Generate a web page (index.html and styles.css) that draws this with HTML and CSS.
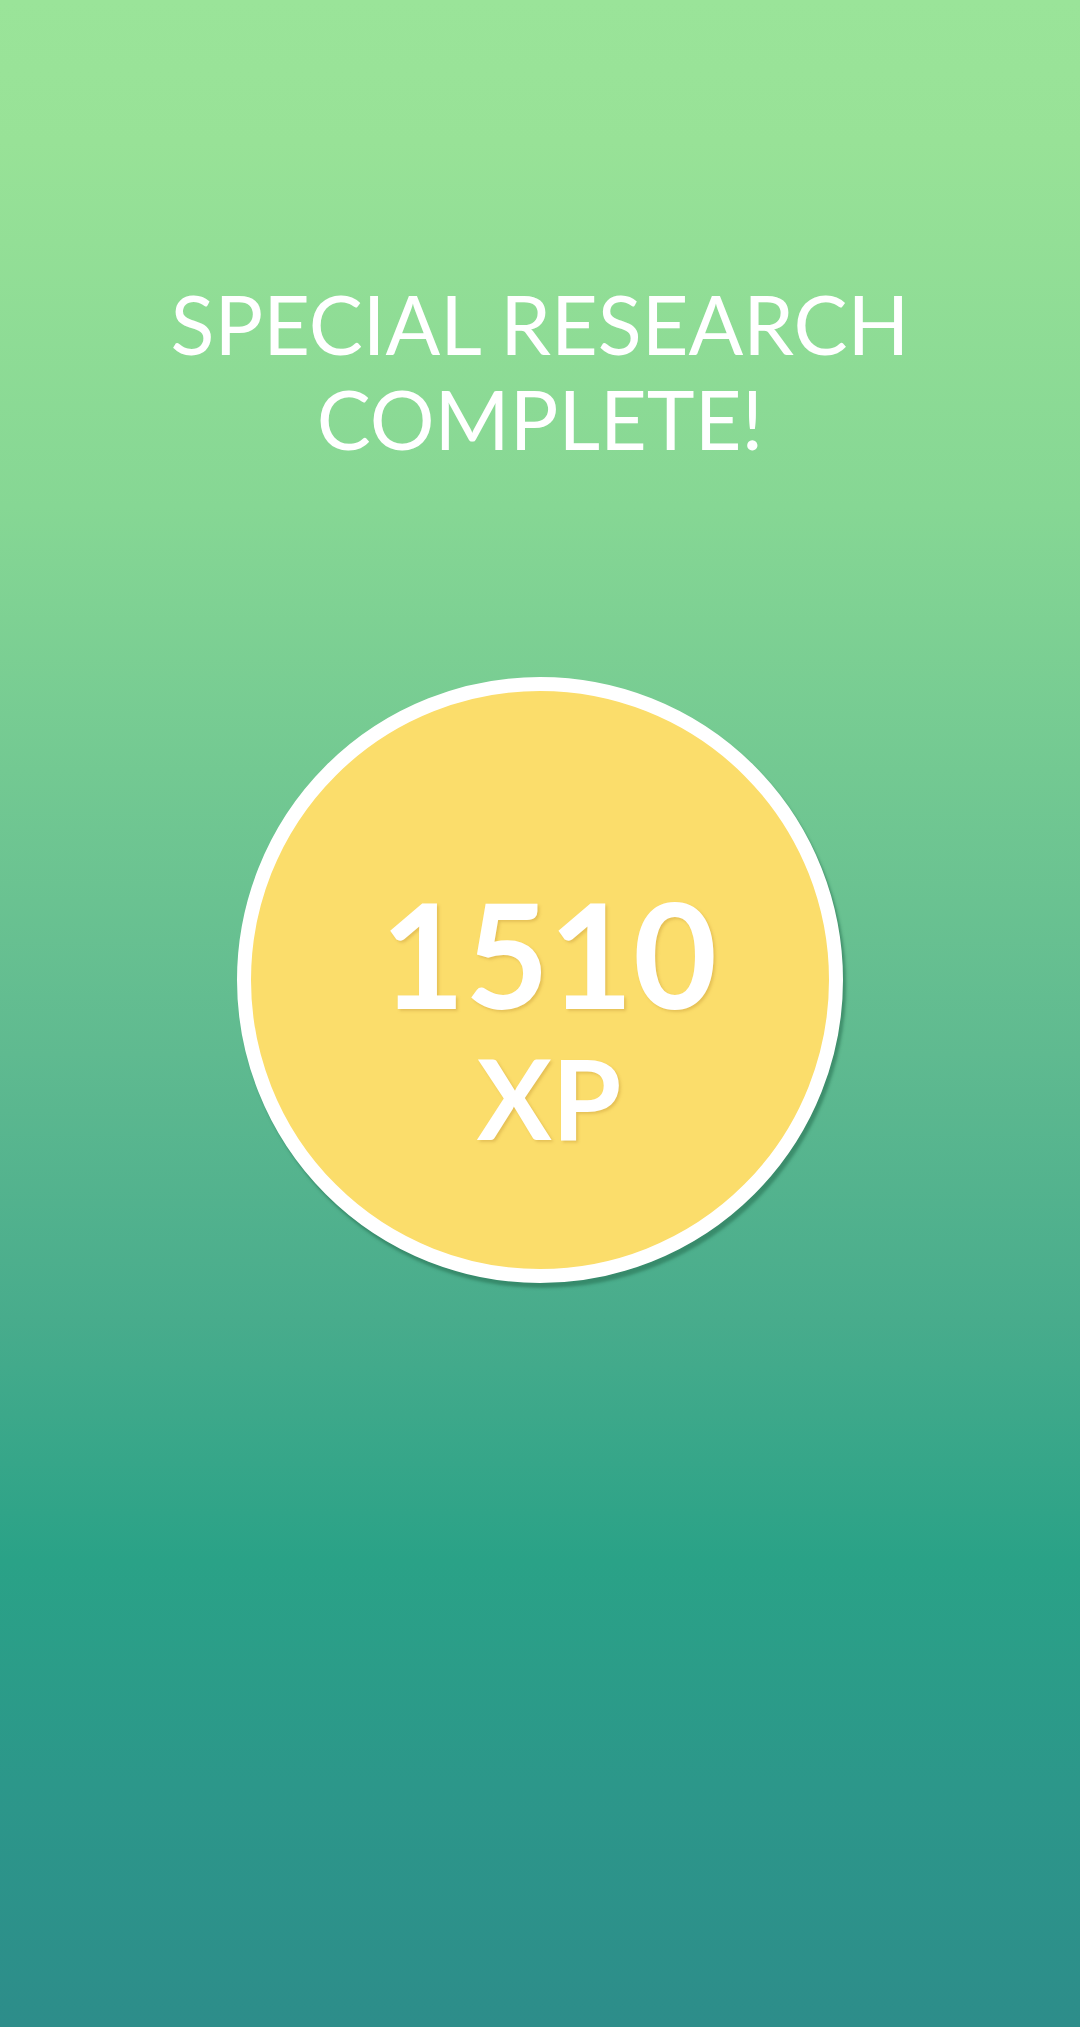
FILE: index.html
```html
<!DOCTYPE html>
<html lang="en">
<head>
<meta charset="utf-8">
<title>Special Research Complete</title>
<link rel="stylesheet" href="styles.css">
</head>
<body>
<main class="screen">
  <h1 class="title">SPECIAL RESEARCH<br>COMPLETE!</h1>
  <div class="reward">
    <span class="reward-amount">1510</span>
    <span class="reward-unit">XP</span>
  </div>
</main>
</body>
</html>
```
FILE: styles.css
```css
html, body {
  margin: 0;
  padding: 0;
}

body {
  width: 1080px;
  height: 2027px;
  overflow: hidden;
  font-family: "Lato", "Liberation Sans", sans-serif;
}

.screen {
  height: 2027px;
  box-sizing: border-box;
  display: flex;
  flex-direction: column;
  align-items: center;
  padding-top: 276px;
  background: linear-gradient(180deg,
    #9ae499 0%,
    #98e297 7%,
    #86d794 25%,
    #73c992 38%,
    #5fba90 52%,
    #48ac8c 65%,
    #2aa287 77%,
    #2c978a 88%,
    #2d8d8a 100%);
}

.title {
  margin: 0;
  font-size: 81px;
  line-height: 95px;
  font-weight: 400;
  color: #ffffff;
  text-align: center;
  letter-spacing: 0;
}

.reward {
  margin-top: 211px;
  width: 606px;
  height: 606px;
  box-sizing: border-box;
  border: 14px solid #ffffff;
  border-radius: 50%;
  background: #fbdd6b;
  box-shadow: 3px 5px 3px rgba(38, 110, 80, 0.55);
  display: flex;
  flex-direction: column;
  align-items: center;
  padding-top: 190px;
  padding-left: 18px;
  color: #ffffff;
  font-weight: 700;
  text-shadow: 2px 2px 3px rgba(190, 140, 50, 0.35);
}

.reward-amount {
  font-size: 145px;
  line-height: 145px;
}

.reward-unit {
  margin-top: 15px;
  font-size: 112px;
  line-height: 112px;
}
```
